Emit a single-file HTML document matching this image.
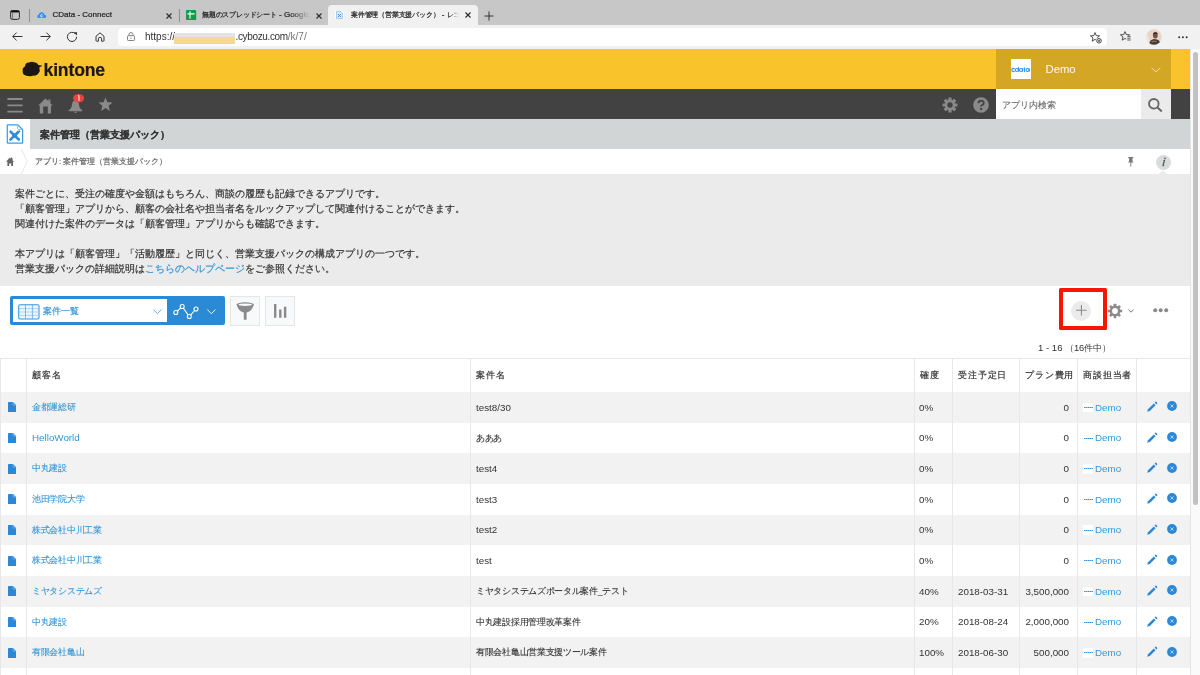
<!DOCTYPE html>
<html lang="ja">
<head>
<meta charset="utf-8">
<style>
*{box-sizing:border-box;margin:0;padding:0}
html,body{width:1200px;height:675px;overflow:hidden;background:#fff}
html{will-change:transform}
body{font-family:"Liberation Sans",sans-serif;color:#333;position:relative;-webkit-text-stroke:0.2px currentColor}
.abs{position:absolute}
svg{position:absolute;overflow:visible}
/* browser chrome */
#tabbar{left:0;top:0;width:1200px;height:25px;background:#c7c7c7}
#addr{left:0;top:25px;width:1200px;height:24px;background:#f1f1f1}
#urlbox{left:118px;top:28px;width:989px;height:18px;background:#fff;border-radius:4px}
.tabtxt{font-size:8px;color:#222;white-space:nowrap;line-height:10px;top:10px}
.sep{width:1px;background:#8f8f8f}
#acttab{left:328px;top:5px;width:150px;height:21px;background:#f1f1f1;border-radius:4px 4px 0 0}
.url{font-size:10px;line-height:12px;top:31px;white-space:nowrap;color:#333;-webkit-text-stroke:0}
/* kintone header */
#khead{left:0;top:49px;width:1190px;height:40px;background:#f9c42b}
#kuser{left:996px;top:49px;width:175px;height:40px;background:#d4a626}
#kbar{left:0;top:89px;width:1190px;height:30px;background:#424242}
#ksearch{left:996px;top:89px;width:145px;height:30px;background:#fff}
#ksbtn{left:1141px;top:89px;width:30px;height:30px;background:#ebebeb}
#ktitle{left:30px;top:119px;width:1160px;height:30px;background:#d1d5d6}
#kcrumb{left:0;top:149px;width:1190px;height:25px;background:#fff}
#kdesc{left:0;top:174px;width:1190px;height:112px;background:#ebebeb}
#desctext{left:15px;top:186px;font-size:10px;line-height:15px;color:#333;white-space:nowrap}
#desctext a{color:#3498db;text-decoration:none}
#scroll{left:1190px;top:49px;width:10px;height:626px;background:#fafafa;border-left:1px solid #e4e4e4}
#thumb{left:1193.3px;top:51.5px;width:4.8px;height:453px;background:#c1c1c1;border-radius:3px}
/* table */
.th{font-size:8.6px;line-height:34px;height:34px;letter-spacing:0.85px;color:#333;white-space:nowrap}
.td{font-size:9.8px;color:#333;white-space:nowrap;-webkit-text-stroke:0}
.td.jp{-webkit-text-stroke:0.1px currentColor}
.lnk{color:#3498db}
.jp{font-size:8.8px;letter-spacing:-0.3px}
</style>
</head>
<body>
<!-- Tab bar -->
<div id="tabbar" class="abs"></div>
<div id="acttab" class="abs"></div>
<div id="addr" class="abs"></div>
<div id="urlbox" class="abs"></div>
<!-- sidebar icon -->
<svg width="10" height="10" style="left:10px;top:10px" viewBox="0 0 10 10"><rect x="0.6" y="0.6" width="8.8" height="8.8" rx="1.8" fill="none" stroke="#2a2a2a" stroke-width="1"/><rect x="0.6" y="0.6" width="8.8" height="1.8" rx="0.9" fill="#111"/><path d="M2.6 3V9.2" stroke="#555" stroke-width="0.7"/></svg>
<div class="abs sep" style="left:29px;top:9px;height:12.5px"></div>
<!-- cloud -->
<svg width="9.4" height="6" style="left:36.8px;top:11.9px" viewBox="0 0 10 6.4" preserveAspectRatio="none"><path d="M1.9 6.3Q0 6.3 0.1 4.6Q0.2 3.1 1.8 3Q2.2 0.2 5.1 0.2Q7.7 0.3 8 2.8Q9.9 3 9.9 4.7Q9.8 6.3 8.1 6.3Z" fill="#2e93f4"/><path d="M6 3.4Q5.6 2.8 4.9 2.8Q3.9 2.9 3.9 4.1Q3.9 5.3 4.9 5.3Q5.6 5.3 6 4.8" fill="none" stroke="#eaf4ff" stroke-width="1"/></svg>
<div class="abs tabtxt" style="left:52.5px">CData - Connect</div>
<svg width="6" height="6" style="left:166px;top:12.5px" viewBox="0 0 6 6"><path d="M0.5 0.5L5.5 5.5M5.5 0.5L0.5 5.5" stroke="#2a2a2a" stroke-width="1.1"/></svg>
<div class="abs sep" style="left:179px;top:9px;height:12.5px"></div>
<!-- sheets icon -->
<svg width="10" height="10" style="left:185.5px;top:9.9px" viewBox="0 0 10 10"><rect x="0" y="0" width="10.2" height="10.1" rx="1.2" fill="#129b4a"/><path d="M1.5 3.9H8.5M4 1.3V8.8" stroke="#fff" stroke-width="1.1"/></svg>
<div class="abs tabtxt" style="left:202px;width:108px;overflow:hidden;-webkit-mask-image:linear-gradient(to right,#000 82%,transparent)"><span style="font-size:6.8px;letter-spacing:-0.2px">無題のスプレッドシート</span> - Google <span style="font-size:6.8px;letter-spacing:-0.2px">スプレッドシート</span></div>
<svg width="6" height="6" style="left:315.5px;top:12.5px" viewBox="0 0 6 6"><path d="M0.5 0.5L5.5 5.5M5.5 0.5L0.5 5.5" stroke="#2a2a2a" stroke-width="1.1"/></svg>
<!-- active tab -->
<svg width="9" height="8" style="left:335px;top:11px" viewBox="0 0 9 8"><rect x="0" y="0" width="9" height="8" fill="#fff"/><path d="M1.5 0.5H6L7.5 2V7.5H1.5Z" fill="#d6ebfb" stroke="#6fb3ea" stroke-width="0.6"/><path d="M3 3L6 6M6 3L3 6" stroke="#3a94e0" stroke-width="1"/></svg>
<div class="abs tabtxt" style="left:351px;width:108px;overflow:hidden;-webkit-mask-image:linear-gradient(to right,#000 90%,transparent)"><span style="font-size:6.8px;letter-spacing:-0.2px">案件管理（営業支援パック）</span> - <span style="font-size:6.8px;letter-spacing:-0.2px">レコードの一覧</span></div>
<svg width="6" height="6" style="left:464.5px;top:12.3px" viewBox="0 0 6 6"><path d="M0.5 0.5L5.5 5.5M5.5 0.5L0.5 5.5" stroke="#2a2a2a" stroke-width="1.1"/></svg>
<svg width="10" height="10" style="left:484px;top:10.5px" viewBox="0 0 10 10"><path d="M5 0.5V9.5M0.5 5H9.5" stroke="#333" stroke-width="1"/></svg>

<!-- address bar icons -->
<svg width="11" height="9" style="left:12px;top:32px" viewBox="0 0 11 9"><path d="M10.5 4.5H0.8M4.6 0.6L0.7 4.5L4.6 8.4" fill="none" stroke="#333" stroke-width="1"/></svg>
<svg width="11" height="9" style="left:40px;top:32px" viewBox="0 0 11 9"><path d="M0.5 4.5H10.2M6.4 0.6L10.3 4.5L6.4 8.4" fill="none" stroke="#333" stroke-width="1"/></svg>
<svg width="11" height="10" style="left:67px;top:32px" viewBox="0 0 11 10"><path d="M9.6 4.8A4.6 4.6 0 1 1 8.2 1.6" fill="none" stroke="#333" stroke-width="1"/><path d="M6.6 0.2L10 0.2L10 3.4Z" fill="#333"/></svg>
<svg width="10" height="10" style="left:95px;top:32px" viewBox="0 0 10 10"><path d="M1 4.3L5 0.8L9 4.3V8.6Q9 9.2 8.4 9.2H6.6V6.6Q6.6 5.4 5 5.4Q3.4 5.4 3.4 6.6V9.2H1.6Q1 9.2 1 8.6Z" fill="none" stroke="#333" stroke-width="1" stroke-linejoin="round"/></svg>
<svg width="8" height="9" style="left:127px;top:32.3px" viewBox="0 0 8 9"><path d="M2 3.7V2.4Q2 0.5 4 0.5Q6 0.5 6 2.4V3.7" fill="none" stroke="#777" stroke-width="0.9"/><rect x="0.5" y="3.7" width="7" height="4.8" rx="0.8" fill="none" stroke="#777" stroke-width="0.9"/><circle cx="4" cy="6.1" r="0.6" fill="#777"/></svg>
<div class="abs url" style="left:145px">https://</div>
<div class="abs" style="left:174px;top:32.5px;width:61px;height:4.5px;background:#e3e3e3"></div>
<div class="abs" style="left:174px;top:37px;width:61px;height:7.2px;background:#f6d98a"></div>
<div class="abs url" style="left:235.5px;letter-spacing:-0.35px">.cybozu.com<span style="color:#777;letter-spacing:0">/k/7/</span></div>
<!-- right address icons -->
<svg width="12" height="12" style="left:1089.5px;top:31.5px" viewBox="0 0 12 12"><path d="M5.00 0.60L6.23 3.60L9.57 3.82L7.00 5.95L7.82 9.18L5.00 7.40L2.18 9.18L3.00 5.95L0.43 3.82L3.77 3.60Z" fill="none" stroke="#333" stroke-width="0.85" stroke-linejoin="round"/><circle cx="9" cy="8.8" r="3.2" fill="#fff"/><circle cx="9" cy="8.8" r="2.3" fill="none" stroke="#333" stroke-width="0.9"/><path d="M9 7.6V10M7.8 8.8H10.2" stroke="#333" stroke-width="0.8"/></svg>
<svg width="11" height="11" style="left:1119.8px;top:31.3px" viewBox="0 0 11 11"><path d="M5.00 0.60L6.23 3.60L9.57 3.82L7.00 5.95L7.82 9.18L5.00 7.40L2.18 9.18L3.00 5.95L0.43 3.82L3.77 3.60Z" fill="none" stroke="#333" stroke-width="0.85" stroke-linejoin="round"/><rect x="6.2" y="4.8" width="5" height="6" fill="#f1f1f1"/><path d="M7.3 5.4H10.6M7.3 7.2H10.6M7.3 9H10.6" stroke="#333" stroke-width="0.8"/></svg>
<svg width="16" height="16" style="left:1146px;top:29px" viewBox="0 0 16 16"><defs><clipPath id="av"><circle cx="8" cy="8" r="7.7"/></clipPath></defs><g clip-path="url(#av)"><rect width="16" height="16" fill="#e6d6c8"/><path d="M0 4Q4 8 3 16H0Z" fill="#f0e6dc"/><path d="M3 16Q3.5 10.2 8.5 10Q14 10.2 15 16Z" fill="#3d3a36"/><ellipse cx="9.3" cy="6.6" rx="2.4" ry="2.9" fill="#7a5038"/><path d="M6.8 5.6Q7 3 9.4 3Q11.8 3.2 11.8 5.4Q10.4 4.4 8.4 4.9Z" fill="#2a2220"/><path d="M5.5 13.2Q8 11.6 10.6 12.8" stroke="#9a6a4e" stroke-width="1.4" fill="none"/></g></svg>
<svg width="10" height="3" style="left:1178px;top:35.7px" viewBox="0 0 10 3"><circle cx="1.2" cy="1.3" r="1" fill="#333"/><circle cx="4.9" cy="1.3" r="1" fill="#333"/><circle cx="8.6" cy="1.3" r="1" fill="#333"/></svg>

<!-- kintone header -->
<div id="khead" class="abs"></div>
<div id="kuser" class="abs"></div>
<svg width="21" height="16" style="left:21.5px;top:61.3px" viewBox="0 0 21 16"><path d="M4 14.4Q0.6 14 0.7 10.2Q0.2 6.6 3 5.6Q3.2 1.8 7 1.6Q9.4 0.3 12.2 1.3Q15.2 1.5 16.4 4L20.4 4.8L17.3 6.6Q18.6 9.8 16.6 12.2Q14.8 15 11.6 14.6Q8.8 15.6 6.6 14.9Q5 15 4 14.4Z" fill="#1c1715"/></svg>
<div class="abs" style="left:43.5px;top:57.6px;font-size:17.6px;line-height:24px;font-weight:bold;color:#1c1715;letter-spacing:-0.15px">kintone</div>
<div class="abs" style="left:1010.8px;top:59.3px;width:19.8px;height:19.8px;background:#fff"></div><svg width="20" height="6" style="left:1010.8px;top:66.5px" viewBox="0 0 20 6"><g fill="none" stroke="#2a97f2" stroke-width="1.1"><path d="M3.6 2.2Q3 1.3 2.1 1.4Q0.8 1.5 0.8 3Q0.8 4.5 2.1 4.6Q3 4.6 3.6 3.8"/><circle cx="5.9" cy="3" r="1.55"/><path d="M7.45 0.2V4.6"/><circle cx="10" cy="3" r="1.55"/><path d="M11.55 1.4V4.6"/><path d="M13.4 0.6V4.4Q13.5 4.7 14.2 4.6M12.6 1.5H14.2"/><circle cx="16.6" cy="3" r="1.55"/><path d="M18.15 1.4V4.6"/></g></svg>
<div class="abs" style="left:1045.5px;top:62px;font-size:11.3px;line-height:14px;color:#fdfaf0;-webkit-text-stroke:0">Demo</div>
<svg width="10" height="6" style="left:1151px;top:66.5px" viewBox="0 0 10 6"><path d="M0.5 0.8L4.9 5L9.3 0.8" fill="none" stroke="#f2e2b0" stroke-width="0.9"/></svg>

<div id="kbar" class="abs"></div>
<div id="ksearch" class="abs"></div>
<div id="ksbtn" class="abs"></div>
<!-- hamburger -->
<svg width="16" height="14" style="left:7px;top:98px" viewBox="0 0 16 14"><path d="M0.4 1H15.6M0.4 7.3H15.6M0.4 13.7H15.6" stroke="#8a8a8a" stroke-width="1.8"/></svg>
<!-- home -->
<svg width="15" height="16" style="left:37.5px;top:97.5px" viewBox="0 0 15 16"><path d="M0.2 7.6L7.5 0.5L10.4 3.3V1.5H12.4V5.3L14.8 7.6H13V15.5H9.8V8.6H5.2V15.5H1.8V7.6Z" fill="#8a8a8a"/></svg>
<!-- bell -->
<svg width="16" height="16" style="left:67.5px;top:98.5px" viewBox="0 0 16 16"><path d="M7.5 1.2Q4.4 1.4 4 5.4Q3.8 9.4 0.6 11.2Q0.3 12.2 1.2 12.2H13.8Q14.7 12.2 14.4 11.2Q11.2 9.4 11 5.4Q10.6 1.4 7.5 1.2Z" fill="#8a8a8a"/><path d="M6.2 12.8H8.8Q8.6 14 7.5 14Q6.4 14 6.2 12.8Z" fill="#8a8a8a"/></svg>
<svg width="12" height="9" style="left:73.3px;top:93.8px" viewBox="0 0 12 9"><ellipse cx="5.6" cy="4.2" rx="5.5" ry="4.2" fill="#e8453c"/><path d="M5.2 1.8L6 1.6V6.8" stroke="#fff" stroke-width="0.9" fill="none"/></svg>
<!-- star -->
<svg width="15" height="15" style="left:97.8px;top:97.2px" viewBox="0 0 15 15"><path d="M7.5 0.4L9.4 5.2L14.6 5.5L10.6 8.8L11.9 14L7.5 11.1L3.1 14L4.4 8.8L0.4 5.5L5.6 5.2Z" fill="#8a8a8a"/></svg>
<!-- gear -->
<svg width="16" height="16" style="left:942.3px;top:96.5px" viewBox="0 0 16 16"><g fill="#8a8a8a"><circle cx="8" cy="8" r="5.2"/><rect x="6.4" y="0.6" width="3.2" height="14.8" rx="0.5"/><rect x="6.4" y="0.6" width="3.2" height="14.8" rx="0.5" transform="rotate(45 8 8)"/><rect x="6.4" y="0.6" width="3.2" height="14.8" rx="0.5" transform="rotate(90 8 8)"/><rect x="6.4" y="0.6" width="3.2" height="14.8" rx="0.5" transform="rotate(135 8 8)"/></g><circle cx="8" cy="8" r="2.7" fill="#424242"/></svg>
<!-- help -->
<svg width="16" height="16" style="left:972.5px;top:96.5px" viewBox="0 0 16 16"><circle cx="8" cy="8" r="7.8" fill="#8a8a8a"/><path d="M5.4 6.2Q5.4 3.6 8.1 3.6Q10.7 3.7 10.7 5.9Q10.7 7.2 9.2 8Q8.1 8.6 8.1 9.6" fill="none" stroke="#424242" stroke-width="1.9"/><circle cx="8.1" cy="12" r="1.15" fill="#424242"/></svg>
<div class="abs" style="left:1001.5px;top:98.5px;font-size:9px;line-height:12px;color:#666;-webkit-text-stroke:0.1px currentColor">アプリ内検索</div>
<svg width="15" height="14" style="left:1148.3px;top:97.5px" viewBox="0 0 15 14"><circle cx="5.8" cy="5.8" r="4.8" fill="none" stroke="#666" stroke-width="1.8"/><path d="M9.3 9.3L13.8 13.4" stroke="#666" stroke-width="2"/></svg>

<!-- app title -->
<div id="ktitle" class="abs"></div>
<svg width="18" height="20" style="left:6.3px;top:124.3px" viewBox="0 0 18 20"><path d="M1.3 1.5Q1.3 0.8 2 0.8H11.8L16.6 5.6V18.6Q16.6 19.2 16 19.2H2Q1.3 19.2 1.3 18.6Z" fill="#fff" stroke="#3d9be3" stroke-width="1.25"/><path d="M11.6 1V4.2Q11.6 5.4 12.8 5.4H16.4" fill="none" stroke="#7dbbec" stroke-width="0.9"/><path d="M4.6 7.8L12.8 15.4M12 8.2L4.4 15.6" stroke="#2f8ddc" stroke-width="2.7" stroke-linecap="round"/><circle cx="8.6" cy="11.6" r="2.3" fill="#2f8ddc"/><path d="M12.6 6.6L14 8" stroke="#2f8ddc" stroke-width="1.6"/></svg>
<div class="abs" style="left:39.8px;top:127.8px;font-size:10.2px;line-height:14px;font-weight:bold;color:#333;-webkit-text-stroke:0.1px #333">案件管理（営業支援パック）</div>

<!-- breadcrumb -->
<div id="kcrumb" class="abs"></div>
<svg width="9" height="9" style="left:6.3px;top:157.2px" viewBox="0 0 9 9"><path d="M0 4.8L3.6 0.8L4.4 1.6L5.6 0.2L6.6 1.4V3.6L8.4 4.8H7V9H5.2V6.4H3.2V9H1.4V4.8Z" fill="#666"/></svg>
<svg width="8" height="26" style="left:21px;top:149px" viewBox="0 0 8 26"><path d="M0.3 0L6.3 12.5L0.3 25" fill="none" stroke="#dfe3e4" stroke-width="0.8"/></svg>
<div class="abs" style="left:35px;top:155.5px;font-size:8.1px;line-height:11px;color:#666">アプリ: 案件管理（営業支援パック）</div>
<svg width="6" height="10" style="left:1127.8px;top:156.8px" viewBox="0 0 6 10"><path d="M0.3 0H5.3V1.3H4.3L4.6 4.2L5.6 5.4H0L1 4.2L1.3 1.3H0.3Z" fill="#777"/><path d="M2.8 5.2V9.6" stroke="#777" stroke-width="0.9"/></svg>
<div class="abs" style="left:1155.5px;top:154.7px;width:15px;height:15px;border-radius:50%;background:#d8dcdd"></div>
<svg width="6" height="10" style="left:1160.5px;top:157px" viewBox="0 0 6 10"><path d="M3.4 3.4L2.1 8.2Q1.9 8.9 2.6 8.6" fill="none" stroke="#555" stroke-width="1.25" stroke-linecap="round"/><path d="M2.5 3.6H3.6" stroke="#555" stroke-width="0.9"/><circle cx="4" cy="1.3" r="0.85" fill="#555"/></svg>
<svg width="10" height="5" style="left:1158.4px;top:169.5px" viewBox="0 0 10 5"><path d="M0 4.6L5 0.6L10 4.6Z" fill="#ebebeb"/></svg>

<!-- description -->
<div id="kdesc" class="abs"></div>
<div id="desctext" class="abs">案件ごとに、受注の確度や金額はもちろん、商談の履歴も記録できるアプリです。<br>「顧客管理」アプリから、顧客の会社名や担当者名をルックアップして関連付けることができます。<br>関連付けた案件のデータは「顧客管理」アプリからも確認できます。<br><br>本アプリは「顧客管理」「活動履歴」と同じく、営業支援パックの構成アプリの一つです。<br>営業支援パックの詳細説明は<a>こちらのヘルプページ</a>をご参照ください。</div>

<!-- toolbar -->
<div class="abs" style="left:10px;top:295.8px;width:215px;height:29.7px;background:#2b8ad6;border-radius:2px"></div>
<div class="abs" style="left:12.8px;top:298.6px;width:154px;height:23.8px;background:#fff"></div>
<svg width="22" height="16" style="left:17.8px;top:303.5px" viewBox="0 0 22 16"><rect x="0.7" y="0.7" width="20.3" height="14.3" rx="1.5" fill="#eef5fc" stroke="#3b95de" stroke-width="1.1"/><path d="M1 4.6H21M1 8H21M1 11.4H21" stroke="#9ccaf0" stroke-width="0.8"/><path d="M7.5 1V15M14.4 1V15" stroke="#5aa8e6" stroke-width="0.8"/></svg>
<div class="abs" style="left:43px;top:306px;font-size:9px;line-height:11px;color:#3a94dc">案件一覧</div>
<svg width="9" height="6" style="left:152.5px;top:309.3px" viewBox="0 0 9 6"><path d="M0.4 0.5L4.4 4.8L8.4 0.5" fill="none" stroke="#5aa6e4" stroke-width="0.9"/></svg>
<svg width="27" height="16" style="left:172.5px;top:303.5px" viewBox="0 0 27 16"><path d="M2.8 8.5L9.2 2.5L16.3 12.5L23 5" fill="none" stroke="#fff" stroke-width="1.1"/><g fill="#2b8ad6" stroke="#fff" stroke-width="1.1"><circle cx="2.8" cy="8.5" r="2"/><circle cx="9.2" cy="2.5" r="2"/><circle cx="16.3" cy="12.5" r="2"/><circle cx="23" cy="5" r="2"/></g></svg>
<svg width="9" height="6" style="left:207.3px;top:309.3px" viewBox="0 0 9 6"><path d="M0.4 0.5L4.4 4.8L8.4 0.5" fill="none" stroke="#fff" stroke-width="0.9"/></svg>
<div class="abs" style="left:230px;top:295.5px;width:30px;height:30px;background:#f7f9fa;border:1px solid #e3e7e8"></div>
<svg width="19" height="18" style="left:235.8px;top:301.5px" viewBox="0 0 19 18"><ellipse cx="9.2" cy="2.6" rx="8.6" ry="2.3" fill="#8a8a8a"/><path d="M0.6 2.6Q2 9 7.8 10.6V17.2Q7.8 17.8 8.6 17.8H9.8Q10.6 17.8 10.6 17.2V10.6Q16.4 9 17.8 2.6Z" fill="#8a8a8a"/><ellipse cx="9.2" cy="2.7" rx="6.8" ry="1.3" fill="#f7f9fa"/></svg>
<div class="abs" style="left:265px;top:295.5px;width:30px;height:30px;background:#f7f9fa;border:1px solid #e3e7e8"></div>
<svg width="13" height="14" style="left:274px;top:303.5px" viewBox="0 0 13 14"><path d="M1.2 0V13.7M6.3 5.4V13.7M11.1 2.7V13.7" stroke="#8a8a8a" stroke-width="2.4"/></svg>

<!-- right toolbar -->
<div class="abs" style="left:1059px;top:288px;width:48px;height:42px;border:4px solid #f91405;border-radius:1.5px"></div>
<div class="abs" style="left:1071px;top:300.5px;width:20.3px;height:20.3px;border-radius:50%;background:#ebebeb"></div>
<svg width="11" height="11" style="left:1076px;top:305.3px" viewBox="0 0 11 11"><path d="M5.4 0V10.4M0 5.2H10.6" stroke="#8a8a8a" stroke-width="1.1"/></svg>
<svg width="16" height="16" style="left:1107px;top:302.7px" viewBox="0 0 16 16"><g fill="#8a8a8a"><circle cx="8" cy="8" r="5.4"/><rect x="6.7" y="0.8" width="2.6" height="14.4" rx="0.4"/><rect x="6.7" y="0.8" width="2.6" height="14.4" rx="0.4" transform="rotate(45 8 8)"/><rect x="6.7" y="0.8" width="2.6" height="14.4" rx="0.4" transform="rotate(90 8 8)"/><rect x="6.7" y="0.8" width="2.6" height="14.4" rx="0.4" transform="rotate(135 8 8)"/></g><circle cx="8" cy="8" r="2.9" fill="#fff"/></svg>
<svg width="6" height="4" style="left:1128.3px;top:308.8px" viewBox="0 0 6 4"><path d="M0.4 0.5L3 3.2L5.6 0.5" fill="none" stroke="#666" stroke-width="0.9"/></svg>
<svg width="16" height="5" style="left:1152.8px;top:308.3px" viewBox="0 0 16 5"><circle cx="2.2" cy="2.3" r="2" fill="#8a8a8a"/><circle cx="7.7" cy="2.3" r="2" fill="#8a8a8a"/><circle cx="13.2" cy="2.3" r="2" fill="#8a8a8a"/></svg>
<div class="abs" style="left:1038px;top:342px;font-size:9.6px;line-height:12px;color:#333;white-space:nowrap;-webkit-text-stroke:0">1 - 16 <span style="font-size:9.4px;letter-spacing:-0.2px">（16件中）</span></div>
<div class="abs" style="left:0;top:358px;width:1191px;height:34px;background:#fff;border-top:1px solid #e6e9ea"></div>
<div class="abs th" style="left:32px;top:358px">顧客名</div>
<div class="abs th" style="left:476px;top:358px">案件名</div>
<div class="abs th" style="left:920px;top:358px">確度</div>
<div class="abs th" style="left:958px;top:358px">受注予定日</div>
<div class="abs th" style="left:1025px;top:358px">プラン費用</div>
<div class="abs th" style="left:1083px;top:358px">商談担当者</div>
<div class="abs" style="left:0;top:392.00px;width:1190px;height:30.67px;background:#f2f2f2"></div>
<svg width="8" height="10" viewBox="0 0 8 10" style="left:8px;top:402.33px"><path d="M0 0.6Q0 0 0.6 0H5L8 3V9.4Q8 10 7.4 10H0.6Q0 10 0 9.4Z" fill="#2b88d6"/><path d="M5 0.3V2.4Q5 3 5.6 3H7.7" fill="none" stroke="#8fc0ea" stroke-width="0.7"/></svg>
<div class="abs td lnk jp" style="left:32px;top:392.00px;height:30.67px;line-height:30.67px">金都運総研</div>
<div class="abs td" style="left:476px;top:392.80px;height:30.67px;line-height:30.67px">test8/30</div>
<div class="abs td" style="left:919px;top:392.80px;height:30.67px;line-height:30.67px">0%</div>
<div class="abs td" style="right:131px;top:392.80px;height:30.67px;line-height:30.67px;text-align:right">0</div>
<div class="abs" style="left:1083px;top:402.73px;width:10px;height:9.5px;background:#fff"><div class="abs" style="left:0.5px;top:4.3px;width:9px;height:1px;background:repeating-linear-gradient(to right,#2f95e6 0 1.4px,#7fbfee 1.4px 1.9px)"></div></div>
<div class="abs td lnk" style="left:1095px;top:392.80px;height:30.67px;line-height:30.67px">Demo</div>
<svg width="12" height="12" viewBox="0 0 12 12" style="left:1146px;top:401.03px"><path d="M1.2 10.8L2 8.2L7.8 2.4L9.6 4.2L3.8 10Z" fill="#2b88d6"/><path d="M8.6 1.6L9.4 0.8Q9.8 0.4 10.2 0.8L11.2 1.8Q11.6 2.2 11.2 2.6L10.4 3.4Z" fill="#2b88d6"/></svg>
<svg width="10" height="10" viewBox="0 0 10 10" style="left:1166.8px;top:401.33px"><circle cx="5" cy="5" r="4.9" fill="#2b88d6"/><path d="M3.5 3.5L6.5 6.5M6.5 3.5L3.5 6.5" stroke="#b8d8f4" stroke-width="0.95"/></svg>
<div class="abs" style="left:0;top:422.67px;width:1190px;height:30.67px;background:#fff"></div>
<svg width="8" height="10" viewBox="0 0 8 10" style="left:8px;top:433.00px"><path d="M0 0.6Q0 0 0.6 0H5L8 3V9.4Q8 10 7.4 10H0.6Q0 10 0 9.4Z" fill="#2b88d6"/><path d="M5 0.3V2.4Q5 3 5.6 3H7.7" fill="none" stroke="#8fc0ea" stroke-width="0.7"/></svg>
<div class="abs td lnk" style="left:32px;top:423.47px;height:30.67px;line-height:30.67px">HelloWorld</div>
<div class="abs td jp" style="left:476px;top:422.67px;height:30.67px;line-height:30.67px">あああ</div>
<div class="abs td" style="left:919px;top:423.47px;height:30.67px;line-height:30.67px">0%</div>
<div class="abs td" style="right:131px;top:423.47px;height:30.67px;line-height:30.67px;text-align:right">0</div>
<div class="abs" style="left:1083px;top:433.40px;width:10px;height:9.5px;background:#fff"><div class="abs" style="left:0.5px;top:4.3px;width:9px;height:1px;background:repeating-linear-gradient(to right,#2f95e6 0 1.4px,#7fbfee 1.4px 1.9px)"></div></div>
<div class="abs td lnk" style="left:1095px;top:423.47px;height:30.67px;line-height:30.67px">Demo</div>
<svg width="12" height="12" viewBox="0 0 12 12" style="left:1146px;top:431.70px"><path d="M1.2 10.8L2 8.2L7.8 2.4L9.6 4.2L3.8 10Z" fill="#2b88d6"/><path d="M8.6 1.6L9.4 0.8Q9.8 0.4 10.2 0.8L11.2 1.8Q11.6 2.2 11.2 2.6L10.4 3.4Z" fill="#2b88d6"/></svg>
<svg width="10" height="10" viewBox="0 0 10 10" style="left:1166.8px;top:432.00px"><circle cx="5" cy="5" r="4.9" fill="#2b88d6"/><path d="M3.5 3.5L6.5 6.5M6.5 3.5L3.5 6.5" stroke="#b8d8f4" stroke-width="0.95"/></svg>
<div class="abs" style="left:0;top:453.34px;width:1190px;height:30.67px;background:#f2f2f2"></div>
<svg width="8" height="10" viewBox="0 0 8 10" style="left:8px;top:463.68px"><path d="M0 0.6Q0 0 0.6 0H5L8 3V9.4Q8 10 7.4 10H0.6Q0 10 0 9.4Z" fill="#2b88d6"/><path d="M5 0.3V2.4Q5 3 5.6 3H7.7" fill="none" stroke="#8fc0ea" stroke-width="0.7"/></svg>
<div class="abs td lnk jp" style="left:32px;top:453.34px;height:30.67px;line-height:30.67px">中丸建設</div>
<div class="abs td" style="left:476px;top:454.14px;height:30.67px;line-height:30.67px">test4</div>
<div class="abs td" style="left:919px;top:454.14px;height:30.67px;line-height:30.67px">0%</div>
<div class="abs td" style="right:131px;top:454.14px;height:30.67px;line-height:30.67px;text-align:right">0</div>
<div class="abs" style="left:1083px;top:464.07px;width:10px;height:9.5px;background:#fff"><div class="abs" style="left:0.5px;top:4.3px;width:9px;height:1px;background:repeating-linear-gradient(to right,#2f95e6 0 1.4px,#7fbfee 1.4px 1.9px)"></div></div>
<div class="abs td lnk" style="left:1095px;top:454.14px;height:30.67px;line-height:30.67px">Demo</div>
<svg width="12" height="12" viewBox="0 0 12 12" style="left:1146px;top:462.38px"><path d="M1.2 10.8L2 8.2L7.8 2.4L9.6 4.2L3.8 10Z" fill="#2b88d6"/><path d="M8.6 1.6L9.4 0.8Q9.8 0.4 10.2 0.8L11.2 1.8Q11.6 2.2 11.2 2.6L10.4 3.4Z" fill="#2b88d6"/></svg>
<svg width="10" height="10" viewBox="0 0 10 10" style="left:1166.8px;top:462.68px"><circle cx="5" cy="5" r="4.9" fill="#2b88d6"/><path d="M3.5 3.5L6.5 6.5M6.5 3.5L3.5 6.5" stroke="#b8d8f4" stroke-width="0.95"/></svg>
<div class="abs" style="left:0;top:484.01px;width:1190px;height:30.67px;background:#fff"></div>
<svg width="8" height="10" viewBox="0 0 8 10" style="left:8px;top:494.34px"><path d="M0 0.6Q0 0 0.6 0H5L8 3V9.4Q8 10 7.4 10H0.6Q0 10 0 9.4Z" fill="#2b88d6"/><path d="M5 0.3V2.4Q5 3 5.6 3H7.7" fill="none" stroke="#8fc0ea" stroke-width="0.7"/></svg>
<div class="abs td lnk jp" style="left:32px;top:484.01px;height:30.67px;line-height:30.67px">池田学院大学</div>
<div class="abs td" style="left:476px;top:484.81px;height:30.67px;line-height:30.67px">test3</div>
<div class="abs td" style="left:919px;top:484.81px;height:30.67px;line-height:30.67px">0%</div>
<div class="abs td" style="right:131px;top:484.81px;height:30.67px;line-height:30.67px;text-align:right">0</div>
<div class="abs" style="left:1083px;top:494.74px;width:10px;height:9.5px;background:#fff"><div class="abs" style="left:0.5px;top:4.3px;width:9px;height:1px;background:repeating-linear-gradient(to right,#2f95e6 0 1.4px,#7fbfee 1.4px 1.9px)"></div></div>
<div class="abs td lnk" style="left:1095px;top:484.81px;height:30.67px;line-height:30.67px">Demo</div>
<svg width="12" height="12" viewBox="0 0 12 12" style="left:1146px;top:493.04px"><path d="M1.2 10.8L2 8.2L7.8 2.4L9.6 4.2L3.8 10Z" fill="#2b88d6"/><path d="M8.6 1.6L9.4 0.8Q9.8 0.4 10.2 0.8L11.2 1.8Q11.6 2.2 11.2 2.6L10.4 3.4Z" fill="#2b88d6"/></svg>
<svg width="10" height="10" viewBox="0 0 10 10" style="left:1166.8px;top:493.34px"><circle cx="5" cy="5" r="4.9" fill="#2b88d6"/><path d="M3.5 3.5L6.5 6.5M6.5 3.5L3.5 6.5" stroke="#b8d8f4" stroke-width="0.95"/></svg>
<div class="abs" style="left:0;top:514.68px;width:1190px;height:30.67px;background:#f2f2f2"></div>
<svg width="8" height="10" viewBox="0 0 8 10" style="left:8px;top:525.02px"><path d="M0 0.6Q0 0 0.6 0H5L8 3V9.4Q8 10 7.4 10H0.6Q0 10 0 9.4Z" fill="#2b88d6"/><path d="M5 0.3V2.4Q5 3 5.6 3H7.7" fill="none" stroke="#8fc0ea" stroke-width="0.7"/></svg>
<div class="abs td lnk jp" style="left:32px;top:514.68px;height:30.67px;line-height:30.67px">株式会社中川工業</div>
<div class="abs td" style="left:476px;top:515.48px;height:30.67px;line-height:30.67px">test2</div>
<div class="abs td" style="left:919px;top:515.48px;height:30.67px;line-height:30.67px">0%</div>
<div class="abs td" style="right:131px;top:515.48px;height:30.67px;line-height:30.67px;text-align:right">0</div>
<div class="abs" style="left:1083px;top:525.42px;width:10px;height:9.5px;background:#fff"><div class="abs" style="left:0.5px;top:4.3px;width:9px;height:1px;background:repeating-linear-gradient(to right,#2f95e6 0 1.4px,#7fbfee 1.4px 1.9px)"></div></div>
<div class="abs td lnk" style="left:1095px;top:515.48px;height:30.67px;line-height:30.67px">Demo</div>
<svg width="12" height="12" viewBox="0 0 12 12" style="left:1146px;top:523.72px"><path d="M1.2 10.8L2 8.2L7.8 2.4L9.6 4.2L3.8 10Z" fill="#2b88d6"/><path d="M8.6 1.6L9.4 0.8Q9.8 0.4 10.2 0.8L11.2 1.8Q11.6 2.2 11.2 2.6L10.4 3.4Z" fill="#2b88d6"/></svg>
<svg width="10" height="10" viewBox="0 0 10 10" style="left:1166.8px;top:524.02px"><circle cx="5" cy="5" r="4.9" fill="#2b88d6"/><path d="M3.5 3.5L6.5 6.5M6.5 3.5L3.5 6.5" stroke="#b8d8f4" stroke-width="0.95"/></svg>
<div class="abs" style="left:0;top:545.35px;width:1190px;height:30.67px;background:#fff"></div>
<svg width="8" height="10" viewBox="0 0 8 10" style="left:8px;top:555.69px"><path d="M0 0.6Q0 0 0.6 0H5L8 3V9.4Q8 10 7.4 10H0.6Q0 10 0 9.4Z" fill="#2b88d6"/><path d="M5 0.3V2.4Q5 3 5.6 3H7.7" fill="none" stroke="#8fc0ea" stroke-width="0.7"/></svg>
<div class="abs td lnk jp" style="left:32px;top:545.35px;height:30.67px;line-height:30.67px">株式会社中川工業</div>
<div class="abs td" style="left:476px;top:546.15px;height:30.67px;line-height:30.67px">test</div>
<div class="abs td" style="left:919px;top:546.15px;height:30.67px;line-height:30.67px">0%</div>
<div class="abs td" style="right:131px;top:546.15px;height:30.67px;line-height:30.67px;text-align:right">0</div>
<div class="abs" style="left:1083px;top:556.09px;width:10px;height:9.5px;background:#fff"><div class="abs" style="left:0.5px;top:4.3px;width:9px;height:1px;background:repeating-linear-gradient(to right,#2f95e6 0 1.4px,#7fbfee 1.4px 1.9px)"></div></div>
<div class="abs td lnk" style="left:1095px;top:546.15px;height:30.67px;line-height:30.67px">Demo</div>
<svg width="12" height="12" viewBox="0 0 12 12" style="left:1146px;top:554.39px"><path d="M1.2 10.8L2 8.2L7.8 2.4L9.6 4.2L3.8 10Z" fill="#2b88d6"/><path d="M8.6 1.6L9.4 0.8Q9.8 0.4 10.2 0.8L11.2 1.8Q11.6 2.2 11.2 2.6L10.4 3.4Z" fill="#2b88d6"/></svg>
<svg width="10" height="10" viewBox="0 0 10 10" style="left:1166.8px;top:554.69px"><circle cx="5" cy="5" r="4.9" fill="#2b88d6"/><path d="M3.5 3.5L6.5 6.5M6.5 3.5L3.5 6.5" stroke="#b8d8f4" stroke-width="0.95"/></svg>
<div class="abs" style="left:0;top:576.02px;width:1190px;height:30.67px;background:#f2f2f2"></div>
<svg width="8" height="10" viewBox="0 0 8 10" style="left:8px;top:586.36px"><path d="M0 0.6Q0 0 0.6 0H5L8 3V9.4Q8 10 7.4 10H0.6Q0 10 0 9.4Z" fill="#2b88d6"/><path d="M5 0.3V2.4Q5 3 5.6 3H7.7" fill="none" stroke="#8fc0ea" stroke-width="0.7"/></svg>
<div class="abs td lnk jp" style="left:32px;top:576.02px;height:30.67px;line-height:30.67px">ミヤタシステムズ</div>
<div class="abs td jp" style="left:476px;top:576.02px;height:30.67px;line-height:30.67px">ミヤタシステムズポータル案件_テスト</div>
<div class="abs td" style="left:919px;top:576.82px;height:30.67px;line-height:30.67px">40%</div>
<div class="abs td" style="left:958px;top:576.82px;height:30.67px;line-height:30.67px">2018-03-31</div>
<div class="abs td" style="right:131px;top:576.82px;height:30.67px;line-height:30.67px;text-align:right">3,500,000</div>
<div class="abs" style="left:1083px;top:586.75px;width:10px;height:9.5px;background:#fff"><div class="abs" style="left:0.5px;top:4.3px;width:9px;height:1px;background:repeating-linear-gradient(to right,#2f95e6 0 1.4px,#7fbfee 1.4px 1.9px)"></div></div>
<div class="abs td lnk" style="left:1095px;top:576.82px;height:30.67px;line-height:30.67px">Demo</div>
<svg width="12" height="12" viewBox="0 0 12 12" style="left:1146px;top:585.06px"><path d="M1.2 10.8L2 8.2L7.8 2.4L9.6 4.2L3.8 10Z" fill="#2b88d6"/><path d="M8.6 1.6L9.4 0.8Q9.8 0.4 10.2 0.8L11.2 1.8Q11.6 2.2 11.2 2.6L10.4 3.4Z" fill="#2b88d6"/></svg>
<svg width="10" height="10" viewBox="0 0 10 10" style="left:1166.8px;top:585.36px"><circle cx="5" cy="5" r="4.9" fill="#2b88d6"/><path d="M3.5 3.5L6.5 6.5M6.5 3.5L3.5 6.5" stroke="#b8d8f4" stroke-width="0.95"/></svg>
<div class="abs" style="left:0;top:606.69px;width:1190px;height:30.67px;background:#fff"></div>
<svg width="8" height="10" viewBox="0 0 8 10" style="left:8px;top:617.03px"><path d="M0 0.6Q0 0 0.6 0H5L8 3V9.4Q8 10 7.4 10H0.6Q0 10 0 9.4Z" fill="#2b88d6"/><path d="M5 0.3V2.4Q5 3 5.6 3H7.7" fill="none" stroke="#8fc0ea" stroke-width="0.7"/></svg>
<div class="abs td lnk jp" style="left:32px;top:606.69px;height:30.67px;line-height:30.67px">中丸建設</div>
<div class="abs td jp" style="left:476px;top:606.69px;height:30.67px;line-height:30.67px">中丸建設採用管理改革案件</div>
<div class="abs td" style="left:919px;top:607.49px;height:30.67px;line-height:30.67px">20%</div>
<div class="abs td" style="left:958px;top:607.49px;height:30.67px;line-height:30.67px">2018-08-24</div>
<div class="abs td" style="right:131px;top:607.49px;height:30.67px;line-height:30.67px;text-align:right">2,000,000</div>
<div class="abs" style="left:1083px;top:617.43px;width:10px;height:9.5px;background:#fff"><div class="abs" style="left:0.5px;top:4.3px;width:9px;height:1px;background:repeating-linear-gradient(to right,#2f95e6 0 1.4px,#7fbfee 1.4px 1.9px)"></div></div>
<div class="abs td lnk" style="left:1095px;top:607.49px;height:30.67px;line-height:30.67px">Demo</div>
<svg width="12" height="12" viewBox="0 0 12 12" style="left:1146px;top:615.73px"><path d="M1.2 10.8L2 8.2L7.8 2.4L9.6 4.2L3.8 10Z" fill="#2b88d6"/><path d="M8.6 1.6L9.4 0.8Q9.8 0.4 10.2 0.8L11.2 1.8Q11.6 2.2 11.2 2.6L10.4 3.4Z" fill="#2b88d6"/></svg>
<svg width="10" height="10" viewBox="0 0 10 10" style="left:1166.8px;top:616.03px"><circle cx="5" cy="5" r="4.9" fill="#2b88d6"/><path d="M3.5 3.5L6.5 6.5M6.5 3.5L3.5 6.5" stroke="#b8d8f4" stroke-width="0.95"/></svg>
<div class="abs" style="left:0;top:637.36px;width:1190px;height:30.67px;background:#f2f2f2"></div>
<svg width="8" height="10" viewBox="0 0 8 10" style="left:8px;top:647.70px"><path d="M0 0.6Q0 0 0.6 0H5L8 3V9.4Q8 10 7.4 10H0.6Q0 10 0 9.4Z" fill="#2b88d6"/><path d="M5 0.3V2.4Q5 3 5.6 3H7.7" fill="none" stroke="#8fc0ea" stroke-width="0.7"/></svg>
<div class="abs td lnk jp" style="left:32px;top:637.36px;height:30.67px;line-height:30.67px">有限会社亀山</div>
<div class="abs td jp" style="left:476px;top:637.36px;height:30.67px;line-height:30.67px">有限会社亀山営業支援ツール案件</div>
<div class="abs td" style="left:919px;top:638.16px;height:30.67px;line-height:30.67px">100%</div>
<div class="abs td" style="left:958px;top:638.16px;height:30.67px;line-height:30.67px">2018-06-30</div>
<div class="abs td" style="right:131px;top:638.16px;height:30.67px;line-height:30.67px;text-align:right">500,000</div>
<div class="abs" style="left:1083px;top:648.10px;width:10px;height:9.5px;background:#fff"><div class="abs" style="left:0.5px;top:4.3px;width:9px;height:1px;background:repeating-linear-gradient(to right,#2f95e6 0 1.4px,#7fbfee 1.4px 1.9px)"></div></div>
<div class="abs td lnk" style="left:1095px;top:638.16px;height:30.67px;line-height:30.67px">Demo</div>
<svg width="12" height="12" viewBox="0 0 12 12" style="left:1146px;top:646.40px"><path d="M1.2 10.8L2 8.2L7.8 2.4L9.6 4.2L3.8 10Z" fill="#2b88d6"/><path d="M8.6 1.6L9.4 0.8Q9.8 0.4 10.2 0.8L11.2 1.8Q11.6 2.2 11.2 2.6L10.4 3.4Z" fill="#2b88d6"/></svg>
<svg width="10" height="10" viewBox="0 0 10 10" style="left:1166.8px;top:646.70px"><circle cx="5" cy="5" r="4.9" fill="#2b88d6"/><path d="M3.5 3.5L6.5 6.5M6.5 3.5L3.5 6.5" stroke="#b8d8f4" stroke-width="0.95"/></svg>
<div class="abs" style="left:0;top:668.03px;width:1190px;height:30.67px;background:#fff"></div>
<div class="abs" style="left:0px;top:358px;width:1px;height:317px;background:#e6e9ea"></div>
<div class="abs" style="left:26px;top:358px;width:1px;height:317px;background:#e6e9ea"></div>
<div class="abs" style="left:470px;top:358px;width:1px;height:317px;background:#e6e9ea"></div>
<div class="abs" style="left:914px;top:358px;width:1px;height:317px;background:#e6e9ea"></div>
<div class="abs" style="left:952px;top:358px;width:1px;height:317px;background:#e6e9ea"></div>
<div class="abs" style="left:1019px;top:358px;width:1px;height:317px;background:#e6e9ea"></div>
<div class="abs" style="left:1077px;top:358px;width:1px;height:317px;background:#e6e9ea"></div>
<div class="abs" style="left:1136px;top:358px;width:1px;height:317px;background:#e6e9ea"></div>
<div class="abs" style="left:1190px;top:358px;width:1px;height:317px;background:#e6e9ea"></div>
<div id="scroll" class="abs"></div><div id="thumb" class="abs"></div>
</body></html>
